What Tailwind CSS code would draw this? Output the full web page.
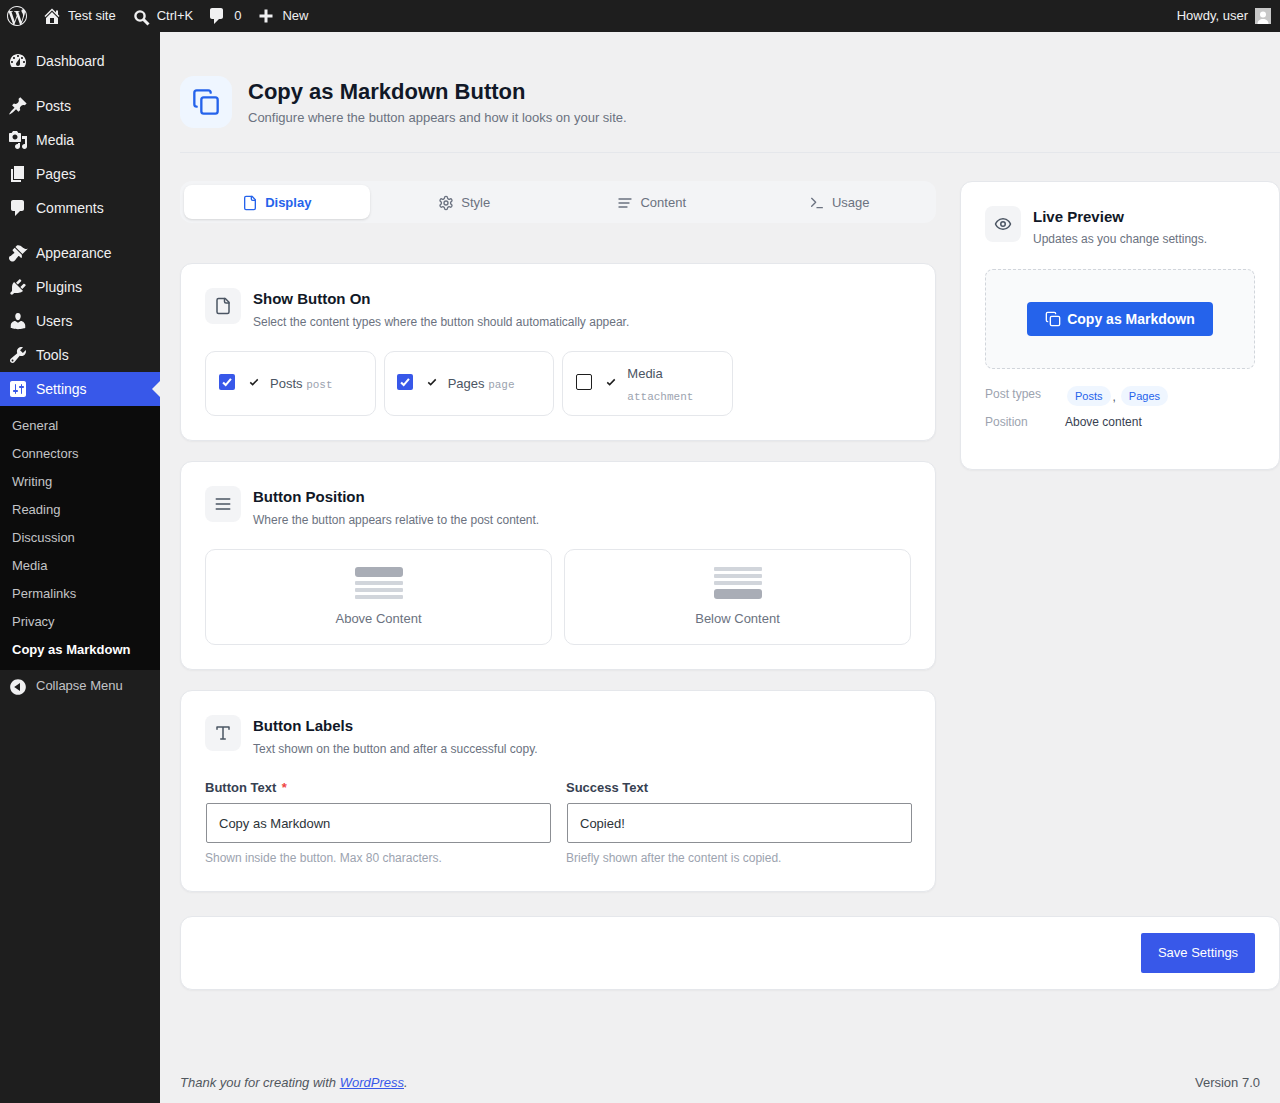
<!DOCTYPE html>
<html lang="en">
<head>
    <meta charset="UTF-8">
    <meta name="viewport" content="width=device-width, initial-scale=1.0">
    <title>Copy as Markdown Button</title>
    <script src="https://cdn.jsdelivr.net/npm/@tailwindcss/browser@4"></script>
</head>
<body class="bg-[#f0f0f1] font-['Liberation_Sans',Arial,sans-serif] text-[13px] text-[#3c434a]">
<div class="flex flex-col h-[1103px] w-[1280px] overflow-hidden">

    <!-- Admin bar -->
    <header class="flex items-center h-8 shrink-0 bg-[#1e1e1e] text-[#f0f0f1] text-[13px]">
        <svg class="ml-[7px] w-5 h-5 fill-[#f0f0f1]" viewBox="0 0 24 24"><path d="M21.469 6.825c.84 1.537 1.318 3.3 1.318 5.175 0 3.979-2.156 7.456-5.363 9.325l3.295-9.527c.615-1.54.82-2.771.82-3.864 0-.405-.026-.78-.07-1.11m-7.981.105c.647-.03 1.232-.105 1.232-.105.582-.075.514-.93-.067-.899 0 0-1.755.135-2.88.135-1.064 0-2.85-.15-2.85-.15-.585-.03-.661.855-.075.885 0 0 .54.061 1.125.09l1.68 4.605-2.37 7.08L5.354 6.9c.649-.03 1.234-.1 1.234-.1.585-.075.516-.93-.065-.896 0 0-1.746.138-2.874.138-.2 0-.438-.008-.69-.015C4.911 3.15 8.235 1.215 12 1.215c2.809 0 5.365 1.072 7.286 2.833-.046-.003-.091-.009-.141-.009-1.06 0-1.812.923-1.812 1.914 0 .89.513 1.643 1.06 2.531.411.72.89 1.643.89 2.977 0 .915-.354 1.994-.821 3.479l-1.075 3.585-3.9-11.61.001.014zM12 22.784c-1.059 0-2.081-.153-3.048-.437l3.237-9.406 3.315 9.087c.024.053.05.101.078.149-1.12.393-2.325.609-3.582.609M1.211 12c0-1.564.336-3.05.935-4.39L7.29 21.709C3.694 19.96 1.212 16.271 1.211 12M12 0C5.385 0 0 5.385 0 12s5.385 12 12 12 12-5.385 12-12S18.615 0 12 0"/></svg>
        <svg class="ml-[15px] w-5 h-5 fill-[#f0f0f1]" viewBox="0 0 20 20"><path fill-rule="evenodd" d="M16 8.5l1.53 1.53-1.06 1.06L10 4.62l-6.47 6.47-1.06-1.06L10 2.5l4 4v-2h2v4zm-6-2.46l6 5.99V18H4v-5.97zM12 17v-5H8v5h4z"/></svg>
        <span class="ml-[6px]">Test site</span>
        <svg class="ml-[17px] mt-[3px] w-[18px] h-[18px] stroke-[#f0f0f1] fill-none" viewBox="0 0 18 18"><circle cx="7" cy="7" r="4.6" stroke-width="2.4"/><path d="M10.5 10.5l5 5" stroke-width="3"/></svg>
        <span class="ml-[6px]">Ctrl+K</span>
        <svg class="ml-[14px] w-5 h-5 fill-[#f0f0f1]" viewBox="0 0 20 20"><path d="M5 2h9c1.1 0 2 .9 2 2v7c0 1.1-.9 2-2 2h-2l-5 5v-5H5c-1.1 0-2-.9-2-2V4c0-1.1.9-2 2-2z"/></svg>
        <span class="ml-[7px]">0</span>
        <svg class="ml-[17px] w-4 h-4 fill-[#f0f0f1]" viewBox="0 0 16 16"><path d="M6.5 1.5h3v5h5v3h-5v5h-3v-5h-5v-3h5z"/></svg>
        <span class="ml-2">New</span>
        <span class="ml-auto">Howdy, user</span>
        <span class="ml-[7px] mr-[9px] flex items-end justify-center w-4 h-4 bg-[#c8c8c8] overflow-hidden">
            <svg class="w-4 h-4 fill-white" viewBox="0 0 16 16"><circle cx="8" cy="6.6" r="3"/><path d="M2.5 16c0-3.5 2.5-5 5.5-5s5.5 1.5 5.5 5z"/></svg>
        </span>
    </header>

    <div class="flex flex-1 min-h-0">
        <!-- Sidebar -->
        <nav class="w-40 shrink-0 bg-[#1e1e1e] text-[14px] text-[#f0f0f1]">
            <a class="flex items-center h-[34px] mt-3 mb-[11px]">
                <svg class="ml-2 w-5 h-5 fill-[#f0f0f1]" viewBox="0 0 20 20"><path fill-rule="evenodd" d="M3.76 16h12.48c1.1-1.37 1.76-3.11 1.76-5 0-4.42-3.58-8-8-8s-8 3.58-8 8c0 1.89.66 3.63 1.76 5zM10 4c.55 0 1 .45 1 1s-.45 1-1 1-1-.45-1-1 .45-1 1-1zM6 6c.55 0 1 .45 1 1s-.45 1-1 1-1-.45-1-1 .45-1 1-1zm8 0c.55 0 1 .45 1 1s-.45 1-1 1-1-.45-1-1 .45-1 1-1zm-5.37 5.55L12 7v6c0 1.1-.9 2-2 2s-2-.9-2-2c0-.57.24-1.08.63-1.45zM4 10c.55 0 1 .45 1 1s-.45 1-1 1-1-.45-1-1 .45-1 1-1zm12 0c.55 0 1 .45 1 1s-.45 1-1 1-1-.45-1-1 .45-1 1-1z"/></svg>
                <span class="ml-2">Dashboard</span>
            </a>
            <a class="flex items-center h-[34px]">
                <svg class="ml-2 w-5 h-5 fill-[#f0f0f1]" viewBox="0 0 20 20"><path d="M10.44 3.02l1.82-1.82 6.36 6.35-1.83 1.82c-1.05-.68-2.48-.57-3.41.36l-.75.75c-.92.93-1.04 2.35-.35 3.41l-1.83 1.82-2.41-2.41-2.8 2.79c-.42.42-3.38 2.71-3.8 2.29s1.86-3.39 2.28-3.81l2.79-2.79L4.1 9.36l1.83-1.82c1.05.69 2.48.57 3.4-.36l.75-.75c.93-.92 1.05-2.35.36-3.41z"/></svg>
                <span class="ml-2">Posts</span>
            </a>
            <a class="flex items-center h-[34px]">
                <svg class="ml-2 w-5 h-5 fill-[#f0f0f1]" viewBox="0 0 20 20"><path fill-rule="evenodd" d="M13 11V4c0-.55-.45-1-1-1h-1.67L9 1H5L3.67 3H2c-.55 0-1 .45-1 1v7c0 .55.45 1 1 1h10c.55 0 1-.45 1-1zM7 4.5c1.38 0 2.5 1.12 2.5 2.5S8.38 9.5 7 9.5 4.5 8.38 4.5 7 5.62 4.5 7 4.5zM14 6h5v10.5c0 1.38-1.12 2.5-2.5 2.5S14 17.88 14 16.5s1.12-2.5 2.5-2.5c.17 0 .34.02.5.05V9h-3V6zm-4 8.05V13h2v3.5c0 1.38-1.12 2.5-2.5 2.5S7 17.88 7 16.5 8.12 14 9.5 14c.17 0 .34.02.5.05z"/></svg>
                <span class="ml-2">Media</span>
            </a>
            <a class="flex items-center h-[34px]">
                <svg class="ml-2 w-5 h-5 fill-[#f0f0f1]" viewBox="0 0 20 20"><path d="M6 15V2h10v13H6zm-1 1h8v2H3V5h2v11z"/></svg>
                <span class="ml-2">Pages</span>
            </a>
            <a class="flex items-center h-[34px]">
                <svg class="ml-2 w-5 h-5 fill-[#f0f0f1]" viewBox="0 0 20 20"><path d="M5 2h9c1.1 0 2 .9 2 2v7c0 1.1-.9 2-2 2h-2l-5 5v-5H5c-1.1 0-2-.9-2-2V4c0-1.1.9-2 2-2z"/></svg>
                <span class="ml-2">Comments</span>
            </a>
            <a class="flex items-center h-[34px] mt-[11px]">
                <svg class="ml-2 w-5 h-5 fill-[#f0f0f1]" viewBox="0 0 20 20"><path d="M14.48 11.06L7.41 3.99l1.5-1.5c.5-.56 2.3-.47 3.51.32 1.21.8 1.43 1.28 2.91 2.1 1.18.64 2.45 1.26 4.45.85zm-.71.71L6.7 4.7 4.93 6.47c-.39.39-.39 1.02 0 1.41l1.06 1.06c.39.39.39 1.03 0 1.42-.6.6-1.43 1.11-2.21 1.69-.35.26-.7.53-1.01.84C1.43 12.73 1 14 1 15.5c0 .5.3 1.2 1 1.9.7.7 1.4 1 1.9 1 1.5 0 2.8-.43 3.64-1.77.31-.31.58-.66.84-1.01.58-.78 1.09-1.61 1.69-2.21.39-.39 1.03-.39 1.42 0l1.06 1.06c.39.39 1.02.39 1.41 0z"/></svg>
                <span class="ml-2">Appearance</span>
            </a>
            <a class="flex items-center h-[34px]">
                <svg class="ml-2 w-5 h-5 fill-[#f0f0f1]" viewBox="0 0 20 20"><path d="M13.11 4.36L9.87 7.6 8 5.73l3.24-3.24c.35-.34 1.05-.2 1.56.32.52.51.66 1.21.31 1.55zm-8 1.77l.91-1.12 9.01 9.01-1.19.84c-.71.71-2.63 1.16-3.82 1.16H6.14L4.9 17.26c-.59.59-1.54.59-2.12 0-.59-.58-.59-1.53 0-2.12l1.24-1.24v-3.88c0-1.13.4-3.19 1.09-3.89zm7.26 3.97l3.24-3.24c.34-.35 1.04-.21 1.55.31.52.51.66 1.21.31 1.55l-3.24 3.25z"/></svg>
                <span class="ml-2">Plugins</span>
            </a>
            <a class="flex items-center h-[34px]">
                <svg class="ml-2 w-5 h-5 fill-[#f0f0f1]" viewBox="0 0 20 20"><path d="M10 9.25c-2.27 0-2.73-3.44-2.73-3.44C7 4.02 7.82 2 9.97 2c2.16 0 2.98 2.02 2.71 3.81 0 0-.41 3.44-2.68 3.44zm0 2.57L12.72 10c2.39 0 4.52 2.33 4.52 4.53v2.49s-3.65 1.13-7.24 1.13c-3.65 0-7.24-1.13-7.24-1.13v-2.49c0-2.25 1.94-4.48 4.47-4.48z"/></svg>
                <span class="ml-2">Users</span>
            </a>
            <a class="flex items-center h-[34px]">
                <svg class="ml-2 w-5 h-5 fill-[#f0f0f1]" viewBox="0 0 20 20"><path fill-rule="evenodd" d="M16.68 9.77c-1.34 1.34-3.3 1.67-4.95.99l-5.41 6.52c-.99.99-2.59.99-3.58 0s-.99-2.59 0-3.57l6.52-5.42c-.68-1.65-.35-3.61.99-4.95 1.28-1.28 3.12-1.62 4.72-1.06l-2.89 2.89 2.82 2.82 2.86-2.87c.53 1.58.18 3.39-1.08 4.67zM3.81 16.21c.4.39 1.04.39 1.43 0 .4-.4.4-1.04 0-1.43-.39-.4-1.03-.4-1.43 0-.39.39-.39 1.03 0 1.43z"/></svg>
                <span class="ml-2">Tools</span>
            </a>
            <a class="relative flex items-center h-[34px] bg-[#3858e9] text-white">
                <svg class="ml-2 w-5 h-5 fill-white" viewBox="0 0 20 20"><path fill-rule="evenodd" d="M18 16V4c0-1.1-.9-2-2-2H4c-1.1 0-2 .9-2 2v12c0 1.1.9 2 2 2h12c1.1 0 2-.9 2-2zM8 11h1c.55 0 1 .45 1 1s-.45 1-1 1H8v1.5c0 .28-.22.5-.5.5s-.5-.22-.5-.5V13H6c-.55 0-1-.45-1-1s.45-1 1-1h1V5.5c0-.28.22-.5.5-.5s.5.22.5.5V11zm5-2h-1c-.55 0-1-.45-1-1s.45-1 1-1h1V5.5c0-.28.22-.5.5-.5s.5.22.5.5V7h1c.55 0 1 .45 1 1s-.45 1-1 1h-1v5.5c0 .28-.22.5-.5.5s-.5-.22-.5-.5V9z"/></svg>
                <span class="ml-2">Settings</span>
                <span class="absolute right-0 top-[9px] border-y-8 border-r-8 border-y-transparent border-r-[#f0f0f1]"></span>
            </a>
            <ul class="bg-[#0c0c0c] pt-[6px] pb-[6px] text-[13px] text-[#c3c4c7]">
                <li class="flex items-center h-7 pl-3">General</li>
                <li class="flex items-center h-7 pl-3">Connectors</li>
                <li class="flex items-center h-7 pl-3">Writing</li>
                <li class="flex items-center h-7 pl-3">Reading</li>
                <li class="flex items-center h-7 pl-3">Discussion</li>
                <li class="flex items-center h-7 pl-3">Media</li>
                <li class="flex items-center h-7 pl-3">Permalinks</li>
                <li class="flex items-center h-7 pl-3">Privacy</li>
                <li class="flex items-center h-7 pl-3 font-semibold text-white">Copy as Markdown</li>
            </ul>
            <a class="flex items-center h-[32px] text-[13px] text-[#c3c4c7]">
                <svg class="ml-2 w-5 h-5 fill-[#f0f0f1] mt-[2px]" viewBox="0 0 20 20"><path fill-rule="evenodd" d="M10 2.16c4.33 0 7.84 3.51 7.84 7.84s-3.51 7.84-7.84 7.84S2.16 14.33 2.16 10 5.71 2.16 10 2.16zm2 11.72V6.12L6.18 9.97z"/></svg>
                <span class="ml-2">Collapse Menu</span>
            </a>
        </nav>

        <!-- Main -->
        <main class="relative flex-1 pl-5">
            <div class="flex gap-4 pt-11 pb-6 border-b border-[#e5e7eb]">
                <div class="flex items-center justify-center w-[52px] h-[52px] rounded-[14px] bg-[#eff6ff]">
                    <svg class="w-7 h-7 fill-none stroke-[#2563eb]" viewBox="0 0 24 24" stroke-width="2" stroke-linecap="round" stroke-linejoin="round"><rect x="8" y="8" width="14" height="14" rx="2"/><path d="M4 16c-1.1 0-2-.9-2-2V4c0-1.1.9-2 2-2h10c1.1 0 2 .9 2 2"/></svg>
                </div>
                <div>
                    <h1 class="mt-px text-[22px] leading-[30px] font-bold text-[#111827]">Copy as Markdown Button</h1>
                    <p class="mt-px text-[13px] leading-[20px] text-[#6b7280]">Configure where the button appears and how it looks on your site.</p>
                </div>
            </div>

            <div class="flex gap-6 mt-7">
                <div class="w-[756px] shrink-0">
                    <!-- Tabs -->
                    <div class="grid grid-cols-4 gap-[2px] h-[42px] p-1 rounded-xl bg-[#f3f4f6] text-[13px] text-[#6b7280]">
                        <div class="flex items-center justify-center gap-[7px] pt-px rounded-lg bg-white shadow-sm font-semibold text-[#2563eb]">
                            <svg class="w-4 h-4 fill-none stroke-current" viewBox="0 0 24 24" stroke-width="2" stroke-linecap="round" stroke-linejoin="round"><path d="M15 2H6a2 2 0 0 0-2 2v16a2 2 0 0 0 2 2h12a2 2 0 0 0 2-2V7Z"/><path d="M14 2v4a2 2 0 0 0 2 2h4"/></svg>
                            Display
                        </div>
                        <div class="flex items-center justify-center gap-[7px] pt-px">
                            <svg class="w-4 h-4 fill-none stroke-current" viewBox="0 0 24 24" stroke-width="2" stroke-linecap="round" stroke-linejoin="round"><path d="M12.22 2h-.44a2 2 0 0 0-2 2v.18a2 2 0 0 1-1 1.73l-.43.25a2 2 0 0 1-2 0l-.15-.08a2 2 0 0 0-2.73.73l-.22.38a2 2 0 0 0 .73 2.73l.15.1a2 2 0 0 1 1 1.72v.51a2 2 0 0 1-1 1.74l-.15.09a2 2 0 0 0-.73 2.73l.22.38a2 2 0 0 0 2.73.73l.15-.08a2 2 0 0 1 2 0l.43.25a2 2 0 0 1 1 1.73V20a2 2 0 0 0 2 2h.44a2 2 0 0 0 2-2v-.18a2 2 0 0 1 1-1.73l.43-.25a2 2 0 0 1 2 0l.15.08a2 2 0 0 0 2.73-.73l.22-.39a2 2 0 0 0-.73-2.73l-.15-.08a2 2 0 0 1-1-1.74v-.5a2 2 0 0 1 1-1.74l.15-.09a2 2 0 0 0 .73-2.73l-.22-.38a2 2 0 0 0-2.73-.73l-.15.08a2 2 0 0 1-2 0l-.43-.25a2 2 0 0 1-1-1.73V4a2 2 0 0 0-2-2z"/><circle cx="12" cy="12" r="3"/></svg>
                            Style
                        </div>
                        <div class="flex items-center justify-center gap-[7px] pt-px">
                            <svg class="w-4 h-4 fill-none stroke-current" viewBox="0 0 24 24" stroke-width="2" stroke-linecap="round"><path d="M3 6h18M3 12h15M3 18h12"/></svg>
                            Content
                        </div>
                        <div class="flex items-center justify-center gap-[7px] pt-px">
                            <svg class="w-4 h-4 fill-none stroke-current" viewBox="0 0 24 24" stroke-width="2" stroke-linecap="round" stroke-linejoin="round"><path d="m4 17 6-6-6-6"/><path d="M12 19h8"/></svg>
                            Usage
                        </div>
                    </div>

                    <!-- Show Button On -->
                    <section class="mt-10 h-[178px] rounded-xl border border-[#e5e7eb] bg-white p-6 shadow-[0_1px_2px_rgba(0,0,0,0.04)]">
                        <div class="flex gap-3">
                            <div class="flex items-center justify-center w-9 h-9 rounded-lg bg-[#f3f4f6]">
                                <svg class="w-[18px] h-[18px] fill-none stroke-[#4b5563]" viewBox="0 0 24 24" stroke-width="2" stroke-linecap="round" stroke-linejoin="round"><path d="M15 2H6a2 2 0 0 0-2 2v16a2 2 0 0 0 2 2h12a2 2 0 0 0 2-2V7Z"/><path d="M14 2v4a2 2 0 0 0 2 2h4"/></svg>
                            </div>
                            <div>
                                <h2 class="mt-px text-[15px] leading-5 font-semibold text-[#111827]">Show Button On</h2>
                                <p class="mt-1 text-xs leading-[18px] text-[#6b7280]">Select the content types where the button should automatically appear.</p>
                            </div>
                        </div>
                        <div class="grid grid-cols-3 gap-2 w-[528px] mt-5">
                            <label class="flex items-center h-[65px] px-[13px] rounded-[10px] border border-[#e5e7eb]">
                                <span class="flex items-center justify-center mb-1 w-4 h-4 rounded-[2px] bg-[#3858e9]"><svg class="w-3.5 h-3.5 fill-none stroke-white" viewBox="0 0 16 16" stroke-width="2.4"><path d="M3.5 8.5l3 3 6-7"/></svg></span>
                                <svg class="ml-[13px] mb-[3px] w-[12px] h-[12px] fill-none stroke-[#1e1e1e]" viewBox="0 0 16 16" stroke-width="2"><path d="M3 8.5l3.2 3L13 4.5"/></svg>
                                <span class="ml-[10px] text-[#4b5563]">Posts <code class="font-['Liberation_Mono',monospace] text-[11px] text-[#9ca3af]">post</code></span>
                            </label>
                            <label class="flex items-center h-[65px] pl-3 pr-[13px] rounded-[10px] border border-[#e5e7eb]">
                                <span class="flex items-center justify-center mb-1 w-4 h-4 rounded-[2px] bg-[#3858e9]"><svg class="w-3.5 h-3.5 fill-none stroke-white" viewBox="0 0 16 16" stroke-width="2.4"><path d="M3.5 8.5l3 3 6-7"/></svg></span>
                                <svg class="ml-[13px] mb-[3px] w-[12px] h-[12px] fill-none stroke-[#1e1e1e]" viewBox="0 0 16 16" stroke-width="2"><path d="M3 8.5l3.2 3L13 4.5"/></svg>
                                <span class="ml-[10px] text-[#4b5563]">Pages <code class="font-['Liberation_Mono',monospace] text-[11px] text-[#9ca3af]">page</code></span>
                            </label>
                            <label class="flex items-center h-[65px] px-[13px] rounded-[10px] border border-[#e5e7eb]">
                                <span class="mb-1 w-4 h-4 rounded-[2px] border border-[#1e1e1e]"></span>
                                <svg class="ml-[13px] mb-[3px] w-[12px] h-[12px] fill-none stroke-[#1e1e1e]" viewBox="0 0 16 16" stroke-width="2"><path d="M3 8.5l3.2 3L13 4.5"/></svg>
                                <span class="ml-[10px] mt-[3px] leading-[22px] text-[#4b5563]">Media<br><code class="font-['Liberation_Mono',monospace] text-[11px] text-[#9ca3af]">attachment</code></span>
                            </label>
                        </div>
                    </section>

                    <!-- Button Position -->
                    <section class="mt-5 h-[209px] rounded-xl border border-[#e5e7eb] bg-white p-6 shadow-[0_1px_2px_rgba(0,0,0,0.04)]">
                        <div class="flex gap-3">
                            <div class="flex items-center justify-center w-9 h-9 rounded-lg bg-[#f3f4f6]">
                                <svg class="w-[20px] h-[20px] fill-none stroke-[#4b5563]" viewBox="0 0 24 24" stroke-width="2" stroke-linecap="round"><path d="M4 6h16M4 12h16M4 18h16"/></svg>
                            </div>
                            <div>
                                <h2 class="mt-px text-[15px] leading-5 font-semibold text-[#111827]">Button Position</h2>
                                <p class="mt-1 text-xs leading-[18px] text-[#6b7280]">Where the button appears relative to the post content.</p>
                            </div>
                        </div>
                        <div class="grid grid-cols-2 gap-3 mt-5">
                            <div class="flex flex-col items-center h-24 pt-[17px] rounded-[10px] border border-[#e5e7eb]">
                                <div class="flex flex-col gap-[3px] w-12">
                                    <div class="h-[10px] rounded-[3px] bg-[#a9adb6]"></div>
                                    <div class="h-1 mt-[1px] rounded-[1px] bg-[#d1d5db]"></div>
                                    <div class="h-1 rounded-[1px] bg-[#d1d5db]"></div>
                                    <div class="h-1 rounded-[1px] bg-[#d1d5db]"></div>
                                </div>
                                <span class="mt-[10px] leading-5 text-[#6b7280]">Above Content</span>
                            </div>
                            <div class="flex flex-col items-center h-24 pt-[17px] rounded-[10px] border border-[#e5e7eb]">
                                <div class="flex flex-col gap-[3px] w-12">
                                    <div class="h-1 rounded-[1px] bg-[#d1d5db]"></div>
                                    <div class="h-1 rounded-[1px] bg-[#d1d5db]"></div>
                                    <div class="h-1 rounded-[1px] bg-[#d1d5db]"></div>
                                    <div class="h-[10px] mt-[1px] rounded-[3px] bg-[#a9adb6]"></div>
                                </div>
                                <span class="mt-[10px] leading-5 text-[#6b7280]">Below Content</span>
                            </div>
                        </div>
                    </section>

                    <!-- Button Labels -->
                    <section class="mt-5 h-[202px] rounded-xl border border-[#e5e7eb] bg-white p-6 shadow-[0_1px_2px_rgba(0,0,0,0.04)]">
                        <div class="flex gap-3">
                            <div class="flex items-center justify-center w-9 h-9 rounded-lg bg-[#f3f4f6]">
                                <svg class="w-[18px] h-[18px] fill-none stroke-[#4b5563]" viewBox="0 0 24 24" stroke-width="2" stroke-linecap="round" stroke-linejoin="round"><path d="M4 7V4h16v3M9 20h6M12 4v16"/></svg>
                            </div>
                            <div>
                                <h2 class="mt-px text-[15px] leading-5 font-semibold text-[#111827]">Button Labels</h2>
                                <p class="mt-1 text-xs leading-[18px] text-[#6b7280]">Text shown on the button and after a successful copy.</p>
                            </div>
                        </div>
                        <div class="grid grid-cols-2 gap-4 mt-5">
                            <div>
                                <label class="block text-[13px] leading-[20px] font-semibold text-[#374151]">Button Text <span class="ml-[2px] text-[#ef4444]">*</span></label>
                                <input class="block w-full h-10 mt-[5px] mx-px px-3 rounded-[2px] border border-[#8c8f94] bg-white text-[13px] text-[#2c3338]" value="Copy as Markdown">
                                <p class="mt-[6px] text-xs leading-[18px] text-[#9ca3af]">Shown inside the button. Max 80 characters.</p>
                            </div>
                            <div>
                                <label class="block text-[13px] leading-[20px] font-semibold text-[#374151]">Success Text</label>
                                <input class="block w-full h-10 mt-[5px] mx-px px-3 rounded-[2px] border border-[#8c8f94] bg-white text-[13px] text-[#2c3338]" value="Copied!">
                                <p class="mt-[6px] text-xs leading-[18px] text-[#9ca3af]">Briefly shown after the content is copied.</p>
                            </div>
                        </div>
                    </section>
                </div>

                <!-- Live Preview -->
                <aside class="flex-1 h-[289px] rounded-xl border border-[#e5e7eb] bg-white p-6 shadow-[0_1px_2px_rgba(0,0,0,0.04)]">
                    <div class="flex gap-3">
                        <div class="flex items-center justify-center w-9 h-9 rounded-lg bg-[#f3f4f6]">
                            <svg class="w-[18px] h-[18px] fill-none stroke-[#4b5563]" viewBox="0 0 24 24" stroke-width="2" stroke-linecap="round" stroke-linejoin="round"><path d="M2 12s3-7 10-7 10 7 10 7-3 7-10 7-10-7-10-7Z"/><circle cx="12" cy="12" r="3"/></svg>
                        </div>
                        <div>
                            <h2 class="mt-px text-[15px] leading-5 font-semibold text-[#111827]">Live Preview</h2>
                            <p class="mt-[3px] text-xs leading-[18px] text-[#6b7280]">Updates as you change settings.</p>
                        </div>
                    </div>
                    <div class="flex items-center justify-center h-[100px] mt-[21px] rounded-lg border border-dashed border-[#d1d5db] bg-[#f9fafb]">
                        <button class="flex items-center gap-[6px] h-[34px] px-[18px] rounded bg-[#2563eb] text-sm font-semibold text-white">
                            <svg class="w-4 h-4 fill-none stroke-white" viewBox="0 0 24 24" stroke-width="2" stroke-linecap="round" stroke-linejoin="round"><rect x="8" y="8" width="14" height="14" rx="2"/><path d="M4 16c-1.1 0-2-.9-2-2V4c0-1.1.9-2 2-2h10c1.1 0 2 .9 2 2"/></svg>
                            Copy as Markdown
                        </button>
                    </div>
                    <div class="flex items-start mt-[17px] text-xs leading-4">
                        <span class="w-[82px] text-[#9ca3af]">Post types</span>
                        <span class="flex items-center">
                            <span class="h-5 px-2 rounded-full bg-[#eff6ff] text-[11px] leading-5 text-[#2563eb]">Posts</span>
                            <span class="mx-[2px] mt-[2px] text-[#4b5563]">,</span>
                            <span class="ml-[3px] h-5 px-2 rounded-full bg-[#eff6ff] text-[11px] leading-5 text-[#2563eb]">Pages</span>
                        </span>
                    </div>
                    <div class="flex mt-2 text-xs leading-4">
                        <span class="w-20 text-[#9ca3af]">Position</span>
                        <span class="text-[#374151]">Above content</span>
                    </div>
                </aside>
            </div>

            <!-- Save bar -->
            <div class="flex justify-end mt-6 h-[74px] px-6 py-4 rounded-xl border border-[#e5e7eb] bg-white shadow-[0_1px_2px_rgba(0,0,0,0.04)]">
                <button class="h-10 w-[114px] rounded-[2px] bg-[#3858e9] text-[13px] text-white">Save Settings</button>
            </div>

            <footer class="absolute left-5 right-5 bottom-[10px] flex justify-between leading-[20px] text-[#50575e]">
                <p class="italic">Thank you for creating with <a class="text-[#3858e9] underline">WordPress</a>.</p>
                <p>Version 7.0</p>
            </footer>
        </main>
    </div>
</div>
</body>
</html>
